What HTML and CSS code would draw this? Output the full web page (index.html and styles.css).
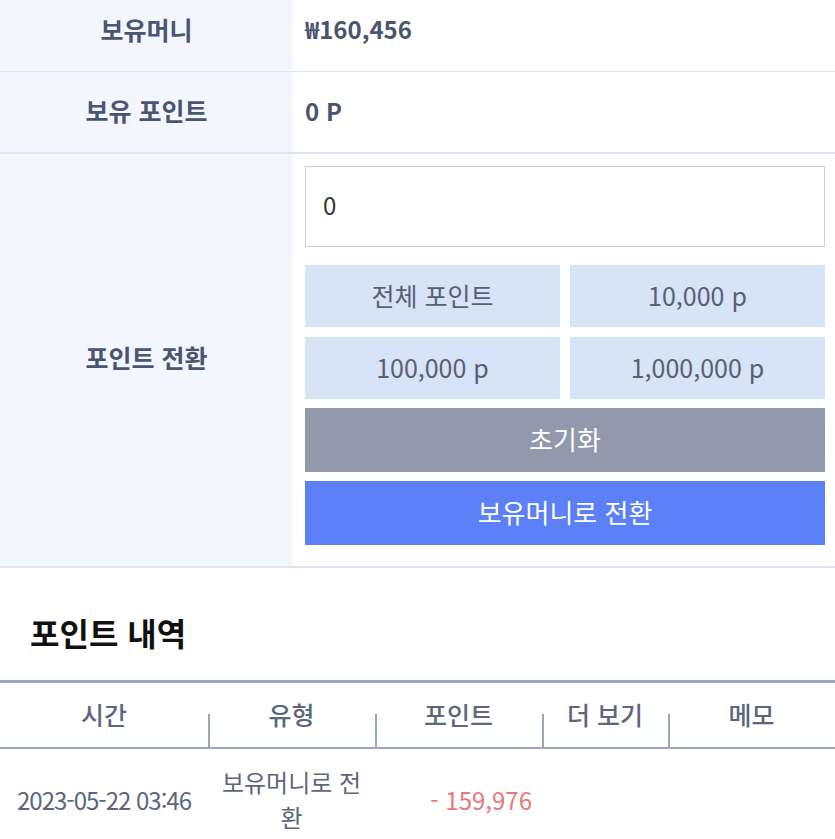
FILE: index.html
```html
<!DOCTYPE html>
<html lang="ko">
<head>
  <meta charset="UTF-8">
  <title>포인트 전환</title>
  <link rel="stylesheet" href="styles.css">
</head>
<body>

<div class="info">
  <div class="info-row money">
    <div class="info-label">보유머니</div>
    <div class="info-value">₩160,456</div>
  </div>
  <div class="info-row point thick">
    <div class="info-label">보유 포인트</div>
    <div class="info-value">0 P</div>
  </div>
  <div class="info-row thick">
    <div class="info-label">포인트 전환</div>
    <div class="info-form">
      <input type="text" class="amount" value="0">
      <div class="quick">
        <button class="quick-btn">전체 포인트</button>
        <button class="quick-btn">10,000 p</button>
        <button class="quick-btn">100,000 p</button>
        <button class="quick-btn">1,000,000 p</button>
      </div>
      <button class="big-btn reset">초기화</button>
      <button class="big-btn convert">보유머니로 전환</button>
    </div>
  </div>
</div>

<h2 class="title">포인트 내역</h2>

<table class="history">
  <thead>
    <tr>
      <th class="c-time">시간</th>
      <th class="c-type">유형</th>
      <th class="c-point">포인트</th>
      <th class="c-more">더 보기</th>
      <th class="c-memo">메모</th>
    </tr>
  </thead>
  <tbody>
    <tr>
      <td class="date">2023-05-22 03:46</td>
      <td>보유머니로 전환</td>
      <td class="minus">- 159,976</td>
      <td></td>
      <td></td>
    </tr>
  </tbody>
</table>

</body>
</html>
```

FILE: styles.css
```css
body {
  margin: 0;
  font-family: "Noto Sans CJK KR", "Noto Sans", sans-serif;
  background: #fff;
  color: #333;
}

.info-row {
  display: grid;
  grid-template-columns: 293px 1fr;
  border-bottom: 1px solid #dfe5f0;
}

.info-row.thick {
  border-bottom-width: 2px;
}

.info-label {
  background: #f3f6fd;
  display: flex;
  align-items: center;
  justify-content: center;
  padding-bottom: 6px;
  font-size: 25px;
  font-weight: bold;
  color: #4b5570;
}

.info-value {
  display: flex;
  align-items: center;
  padding-left: 12px;
  padding-bottom: 6px;
  font-size: 24px;
  font-weight: bold;
  color: #4b5570;
}

.money .info-label,
.money .info-value {
  box-sizing: border-box;
  height: 71px;
  padding-bottom: 14px;
}

.point .info-label,
.point .info-value {
  box-sizing: border-box;
  height: 80px;
  padding-bottom: 4px;
}

.info-form {
  padding: 12px 10px 21px 12px;
  display: flex;
  flex-direction: column;
}

.amount {
  box-sizing: border-box;
  height: 81px;
  border: 1px solid #cfcfcf;
  padding: 0 17px 4px;
  font-family: inherit;
  font-size: 24px;
  color: #333;
  outline: none;
  margin-bottom: 18px;
}

.quick {
  display: grid;
  grid-template-columns: 1fr 1fr;
  gap: 10px;
  margin-bottom: 9px;
}

button {
  font-family: inherit;
  border: none;
  cursor: pointer;
}

.quick-btn {
  height: 62px;
  padding-bottom: 4px;
  background: #d7e3f6;
  color: #586074;
  font-size: 25px;
}

.big-btn {
  height: 64px;
  padding-bottom: 4px;
  color: #fff;
  font-size: 26px;
}

.reset {
  background: #9399ac;
  margin-bottom: 9px;
}

.convert {
  background: #5b80f7;
}

.title {
  margin: 42px 0 26px 30px;
  font-size: 32px;
  line-height: 44px;
  color: #111;
}

.history {
  width: 100%;
  border-collapse: collapse;
  table-layout: fixed;
  border-top: 3px solid #9ba6bc;
}

.history th {
  position: relative;
  height: 62px;
  font-size: 25px;
  font-weight: 500;
  color: #5d667d;
  border-bottom: 2px solid #9ba6bc;
  padding: 0 0 2px;
}

.history th + th::before {
  content: "";
  position: absolute;
  left: 0;
  bottom: 0;
  width: 2px;
  height: 33px;
  background: #9ba6bc;
}

.c-time { width: 208px; }
.c-type { width: 167px; }
.c-point { width: 167px; }
.c-more { width: 126px; }

.history td {
  text-align: center;
  vertical-align: top;
  font-size: 24px;
  line-height: 35px;
  color: #5d667d;
  padding: 15px 8px 0;
}

.history td.date,
.history td.minus {
  padding-top: 33px;
}

.history td.date {
  padding-left: 0;
  padding-right: 0;
  letter-spacing: -1px;
}

.history td.minus {
  text-align: right;
  padding-right: 10px;
  color: #e87878;
}
```
